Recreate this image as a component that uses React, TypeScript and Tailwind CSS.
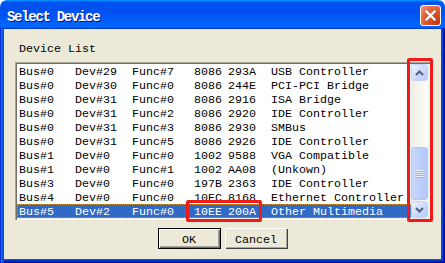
import React from "react";

const rows: string[][] = [
  ["Bus#0", "Dev#29", "Func#7", "8086", "293A", "USB Controller"],
  ["Bus#0", "Dev#30", "Func#0", "8086", "244E", "PCI-PCI Bridge"],
  ["Bus#0", "Dev#31", "Func#0", "8086", "2916", "ISA Bridge"],
  ["Bus#0", "Dev#31", "Func#2", "8086", "2920", "IDE Controller"],
  ["Bus#0", "Dev#31", "Func#3", "8086", "2930", "SMBus"],
  ["Bus#0", "Dev#31", "Func#5", "8086", "2926", "IDE Controller"],
  ["Bus#1", "Dev#0", "Func#0", "1002", "9588", "VGA Compatible"],
  ["Bus#1", "Dev#0", "Func#1", "1002", "AA08", "(Unkown)"],
  ["Bus#3", "Dev#0", "Func#0", "197B", "2363", "IDE Controller"],
  ["Bus#4", "Dev#0", "Func#0", "10EC", "8168", "Ethernet Controller"],
  ["Bus#5", "Dev#2", "Func#0", "10EE", "200A", "Other Multimedia"],
];

function CloseButton() {
  return (
    <div className="mt-[5px] w-[21px] h-[21px] rounded-[3px] border border-white flex items-center justify-center bg-[radial-gradient(circle_at_85%_85%,#c43a12,#e05a32_55%,#ef9a7e)]">
      <svg width="11" height="11" viewBox="0 0 11 11">
        <path d="M1.5 1.5 L9.5 9.5 M9.5 1.5 L1.5 9.5" stroke="#fff" strokeWidth="2.2" strokeLinecap="square" />
      </svg>
    </div>
  );
}

function ScrollButton({ up }: { up: boolean }) {
  return (
    <div className="h-[17px] w-[17px] rounded-[3px] border border-[#c3d3fd] bg-[linear-gradient(135deg,#eef3fe,#c8d8fb_60%,#b6cbf7)] flex items-center justify-center">
      <svg width="9" height="6" viewBox="0 0 9 6">
        <path
          d={up ? "M1 5 L4.5 1.5 L8 5" : "M1 1 L4.5 4.5 L8 1"}
          stroke="#4d6185"
          strokeWidth="2"
          fill="none"
        />
      </svg>
    </div>
  );
}

function Scrollbar() {
  return (
    <div className="w-[17px] flex flex-col bg-[linear-gradient(90deg,#eeede5,#fdfdfa)]">
      <ScrollButton up />
      <div className="flex-1 flex flex-col justify-end pb-[1px]">
        <div className="h-[53px] rounded-[3px] border border-[#b4c8f6] bg-[linear-gradient(90deg,#c9d8fc,#bdd0fa_50%,#b1c7f7)] flex items-center justify-center">
          <svg width="7" height="8" viewBox="0 0 7 8">
            <rect x="0" y="0" width="7" height="1" fill="#eef4fe" />
            <rect x="0" y="1" width="7" height="1" fill="#8cb0f8" />
            <rect x="0" y="2" width="7" height="1" fill="#eef4fe" />
            <rect x="0" y="3" width="7" height="1" fill="#8cb0f8" />
            <rect x="0" y="4" width="7" height="1" fill="#eef4fe" />
            <rect x="0" y="5" width="7" height="1" fill="#8cb0f8" />
            <rect x="0" y="6" width="7" height="1" fill="#eef4fe" />
            <rect x="0" y="7" width="7" height="1" fill="#8cb0f8" />
          </svg>
        </div>
      </div>
      <ScrollButton up={false} />
    </div>
  );
}

export default function App() {
  return (
    <div className="relative w-[445px] h-[263px] flex flex-col overflow-hidden rounded-t-[7px] font-['Liberation_Mono',monospace] text-[11.67px] text-black">
      <div className="h-[29px] shrink-0 flex items-start pl-[7px] pr-[4px] bg-[linear-gradient(180deg,#0997ff,#0053ee_8%,#0050ee_40%,#0066ff_88%,#0066ff_93%,#005bff_95%,#003dd7_96%,#003dd7)]">
        <span className="flex-1 mt-[9px] leading-[16px] text-white font-bold text-[14px] tracking-[-1.3px] [text-shadow:1px_1px_#0a1883]">
          Select Device
        </span>
        <CloseButton />
      </div>
      <div className="flex-1 flex flex-col bg-[#ece9d8] px-[15px] shadow-[inset_1px_0_#0831d9,inset_2px_0_#166aee,inset_3px_0_#0855dd,inset_4px_0_#0855dd,inset_-1px_-1px_#00138c,inset_-2px_-2px_#001ea0,inset_-3px_-3px_#003bda,inset_-4px_-4px_#0855dd]">
        <div className="mt-[13px] ml-[4px] leading-[14px] h-[14px]">Device List</div>
        <div className="mt-[6px] h-[158px] p-[2px] flex shadow-[inset_1px_1px_#aca899,inset_2px_2px_#716f64,inset_-1px_-1px_#ffffff,inset_-2px_-2px_#f1efe2]">
          <div className="flex-1 flex bg-white">
            <div className="flex-1 flex flex-col">
              {rows.map((r, i) => {
                const sel = i === rows.length - 1;
                return (
                  <div
                    key={i}
                    className={
                      sel
                        ? "h-[14px] leading-[17px] pl-[2px] grid grid-cols-[56px_57px_62px_34px_43px_1fr] whitespace-pre bg-[#316ac5] text-white outline-1 outline-dotted -outline-offset-1 outline-[#ce953a]"
                        : "h-[14px] leading-[17px] pl-[2px] grid grid-cols-[56px_57px_62px_34px_43px_1fr] whitespace-pre"
                    }
                  >
                    {r.map((c, j) => (
                      <span key={j}>{c}</span>
                    ))}
                  </div>
                );
              })}
            </div>
            <Scrollbar />
          </div>
        </div>
        <div className="mt-[8px] flex justify-center gap-[4px]">
          <div className="w-[63px] h-[21px] border border-black">
            <div className="w-full h-full flex items-center justify-center pt-[2px] leading-[14px] shadow-[inset_1px_1px_#ffffff,inset_-1px_-1px_#716f64,inset_-2px_-2px_#aca899]">
              OK
            </div>
          </div>
          <div className="w-[63px] h-[21px] flex items-center justify-center pt-[2px] leading-[14px] shadow-[inset_1px_1px_#ffffff,inset_-1px_-1px_#404040,inset_-2px_-2px_#aca899]">
            Cancel
          </div>
        </div>
      </div>
      <div className="absolute left-[186px] top-[200px] w-[76px] h-[22px] border-[3px] border-[#f01a1a] rounded-[2px]" />
      <div className="absolute left-[407px] top-[58px] w-[26px] h-[164px] border-[3px] border-[#f01a1a] rounded-[2px]" />
    </div>
  );
}
